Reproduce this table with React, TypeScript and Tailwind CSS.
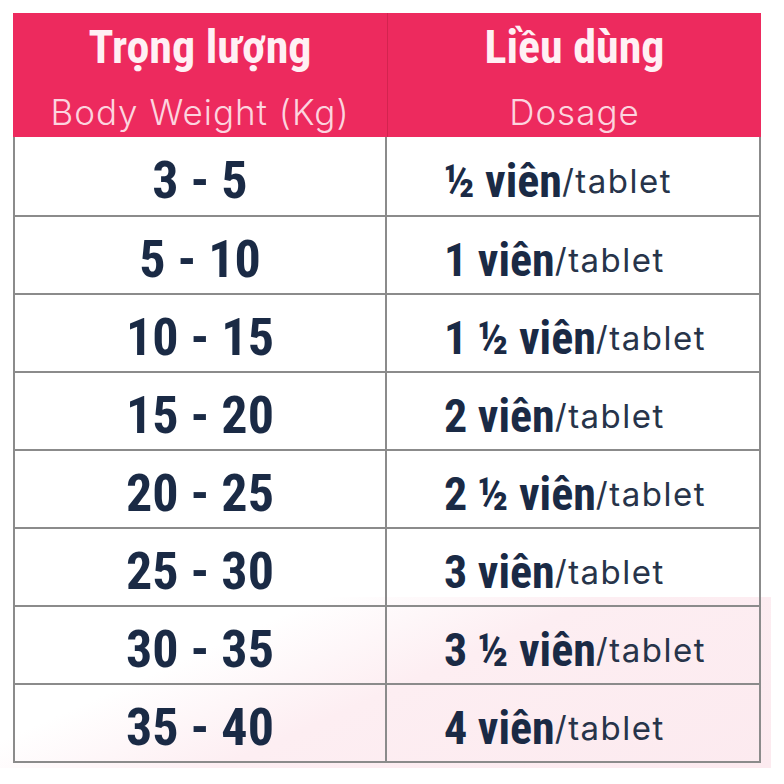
const ROWS = [
  { weight: '3 - 5', dose: '½ viên' },
  { weight: '5 - 10', dose: '1 viên' },
  { weight: '10 - 15', dose: '1 ½ viên' },
  { weight: '15 - 20', dose: '2 viên' },
  { weight: '20 - 25', dose: '2 ½ viên' },
  { weight: '25 - 30', dose: '3 viên' },
  { weight: '30 - 35', dose: '3 ½ viên' },
  { weight: '35 - 40', dose: '4 viên' },
];

const condensed = "font-['Roboto_Condensed','Roboto',sans-serif] font-bold";
const regular = "font-['Inter','Noto_Sans',sans-serif]";

const HeaderCell = ({ title, subtitle }: { title: string; subtitle: string }) => (
  <div className="flex h-[124px] flex-col items-center bg-[#ed2a5e] pt-[11px]">
    <div className={`${condensed} text-[46px] leading-none text-[#fff0f4]`}>{title}</div>
    <div
      className={`${regular} mt-[25px] text-[35px] font-light leading-none tracking-[1px] text-[#fcd4df]`}
    >
      {subtitle}
    </div>
  </div>
);

export default function App() {
  return (
    <div className="relative h-[784px] w-[784px] overflow-hidden bg-white">
      {/* soft pink wash behind the bottom-right of the table */}
      <div className="absolute left-0 top-[597px] h-[171px] w-[771px] bg-[linear-gradient(156deg,rgba(253,236,241,0)_28%,#fdeef2_52%,#fceaef_100%)]" />

      <div className="relative pl-[13px] pt-[13px]">
        <div className="w-[748px]">
          <div className="grid grid-cols-[374px_374px]">
            <HeaderCell title="Trọng lượng" subtitle="Body Weight (Kg)" />
            <div className="border-l border-[#d3234f]">
              <HeaderCell title="Liều dùng" subtitle="Dosage" />
            </div>
          </div>

          <div className="border-x-2 border-b-2 border-[#8b8b8b]">
            {ROWS.map((row) => (
              <div
                key={row.weight}
                className="grid h-[78px] grid-cols-[372px_374px] border-t-2 border-[#8b8b8b] first:border-t-0"
              >
                <div className="flex items-center justify-center border-r-2 border-[#8b8b8b] pt-[10px]">
                  <span className={`${condensed} text-[52px] leading-none text-[#1a2a45]`}>
                    {row.weight}
                  </span>
                </div>
                <div className="flex items-center pl-[57px] pt-[10px]">
                  <span className={`${condensed} text-[46px] leading-none text-[#1a2a45]`}>
                    {row.dose}
                  </span>
                  <span className={`${regular} text-[33px] leading-none tracking-[1.5px] text-[#27344a]`}>
                    /tablet
                  </span>
                </div>
              </div>
            ))}
          </div>
        </div>
      </div>
    </div>
  );
}
